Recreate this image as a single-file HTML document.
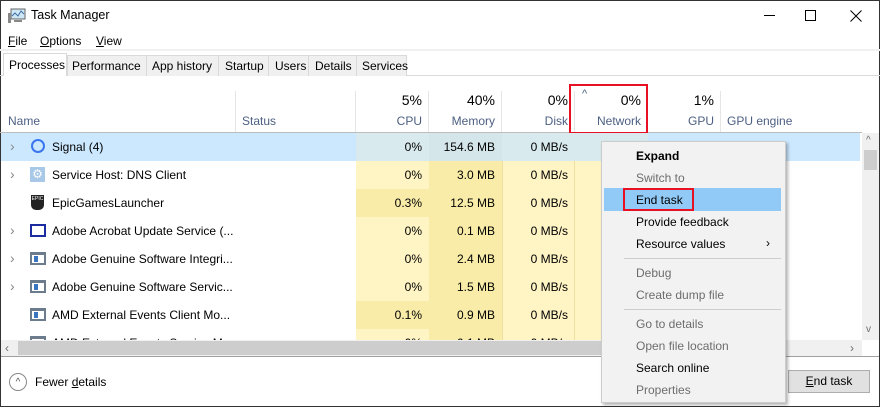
<!DOCTYPE html>
<html><head><style>
*{margin:0;padding:0;box-sizing:border-box}
body{width:880px;height:407px;overflow:hidden;background:#fff;font-family:"Liberation Sans",sans-serif;font-size:12px;color:#000;position:relative}
.a{position:absolute;white-space:nowrap}
.r{text-align:right}
.g{color:#4d6082}
.gy{color:#6d6d6d}
.ch{color:#888;font-size:14px}
</style></head><body>
<div class="a" style="left:0;top:0;width:880px;height:407px;border:1px solid #333"></div>
<svg class="a" style="left:8px;top:8px" width="18" height="16"><rect x="3" y="1" width="14" height="10" fill="#cfe6f5" stroke="#666"/><polyline points="4,8 7,5 10,8 13,3 16,6" fill="none" stroke="#3a6ea5"/><rect x="0" y="5" width="3" height="10" fill="#888"/><rect x="6" y="12" width="8" height="2" fill="#888"/></svg>
<div class="a" style="left:31px;top:8px;font-size:12.5px">Task Manager</div>
<div class="a" style="left:764px;top:15px;width:11px;height:1px;background:#000"></div>
<div class="a" style="left:805px;top:10px;width:11px;height:11px;border:1px solid #000"></div>
<svg class="a" style="left:850px;top:10px" width="12" height="12"><path d="M0.5 0.5L11.5 11.5M11.5 0.5L0.5 11.5" stroke="#000"/></svg>
<div class="a" style="left:8px;top:34px"><u>F</u>ile</div>
<div class="a" style="left:40px;top:34px"><u>O</u>ptions</div>
<div class="a" style="left:96px;top:34px"><u>V</u>iew</div>
<div class="a" style="left:0;top:49px;width:880px;height:2px;background:#f0f0f0"></div>
<div class="a" style="left:0;top:75px;width:880px;height:1px;background:#d9d9d9"></div>
<div class="a" style="left:67px;top:55px;width:340px;height:21px;background:#f0f0f0;border:1px solid #d9d9d9;border-bottom:none"></div>
<div class="a" style="left:3px;top:53px;width:64px;height:23px;background:#fff;border:1px solid #d9d9d9;border-bottom:none"></div>
<div class="a" style="left:9px;top:58px">Processes</div>
<div class="a" style="left:72px;top:59px">Performance</div>
<div class="a" style="left:152px;top:59px">App history</div>
<div class="a" style="left:225px;top:59px">Startup</div>
<div class="a" style="left:275px;top:59px">Users</div>
<div class="a" style="left:315px;top:59px">Details</div>
<div class="a" style="left:362px;top:59px">Services</div>
<div class="a" style="left:146px;top:56px;width:1px;height:20px;background:#d9d9d9"></div>
<div class="a" style="left:218px;top:56px;width:1px;height:20px;background:#d9d9d9"></div>
<div class="a" style="left:268px;top:56px;width:1px;height:20px;background:#d9d9d9"></div>
<div class="a" style="left:308px;top:56px;width:1px;height:20px;background:#d9d9d9"></div>
<div class="a" style="left:356px;top:56px;width:1px;height:20px;background:#d9d9d9"></div>
<div class="a" style="left:0;top:132px;width:862px;height:1px;background:#bcbcbc"></div>
<div class="a" style="left:235px;top:91px;width:1px;height:41px;background:#e5e5e5"></div>
<div class="a" style="left:355px;top:91px;width:1px;height:41px;background:#e5e5e5"></div>
<div class="a" style="left:428px;top:91px;width:1px;height:41px;background:#e5e5e5"></div>
<div class="a" style="left:501px;top:91px;width:1px;height:41px;background:#e5e5e5"></div>
<div class="a" style="left:574px;top:91px;width:1px;height:41px;background:#e5e5e5"></div>
<div class="a" style="left:720px;top:91px;width:1px;height:41px;background:#e5e5e5"></div>
<div class="a g" style="left:8px;top:114px">Name</div>
<div class="a g" style="left:242px;top:114px">Status</div>
<div class="a r" style="left:356px;top:92px;width:66px;font-size:14px">5%</div>
<div class="a r g" style="left:356px;top:114px;width:66px">CPU</div>
<div class="a r" style="left:429px;top:92px;width:66px;font-size:14px">40%</div>
<div class="a r g" style="left:429px;top:114px;width:66px">Memory</div>
<div class="a r" style="left:502px;top:92px;width:66px;font-size:14px">0%</div>
<div class="a r g" style="left:502px;top:114px;width:66px">Disk</div>
<div class="a g" style="left:582px;top:88px;font-size:11px">^</div>
<div class="a r" style="left:575px;top:92px;width:66px;font-size:14px">0%</div>
<div class="a r g" style="left:575px;top:114px;width:66px">Network</div>
<div class="a r" style="left:648px;top:92px;width:66px;font-size:14px">1%</div>
<div class="a r g" style="left:648px;top:114px;width:66px">GPU</div>
<div class="a g" style="left:727px;top:114px">GPU engine</div>
<div class="a" style="left:569px;top:84px;width:79px;height:50px;border:2px solid #e81123"></div>
<div class="a" style="left:356px;top:161px;width:73px;height:179px;background:#fff4c4"></div>
<div class="a" style="left:429px;top:161px;width:73px;height:179px;background:#f9eca8"></div>
<div class="a" style="left:502px;top:161px;width:73px;height:179px;background:#fff4c4"></div>
<div class="a" style="left:575px;top:161px;width:75px;height:179px;background:#fff4c4"></div>
<div class="a" style="left:356px;top:189px;width:73px;height:28px;background:#f9eca8"></div>
<div class="a" style="left:356px;top:301px;width:73px;height:28px;background:#f9eca8"></div>
<div class="a" style="left:502px;top:161px;width:1px;height:179px;background:#f0e0a0"></div>
<div class="a" style="left:574px;top:161px;width:1px;height:179px;background:#f0e0a0"></div>
<div class="a" style="left:1px;top:133px;width:859px;height:28px;background:#cce8ff"></div>
<div class="a" style="left:356px;top:133px;width:292px;height:28px;background:#d9eaee"></div>
<div class="a" style="left:429px;top:133px;width:73px;height:28px;background:#d5e6ea"></div>
<div class="a ch" style="left:10px;top:138px">›</div>
<div class="a" style="left:31px;top:139px;width:14px;height:14px;border:2px solid #3a76f0;border-radius:50%"></div>
<div class="a" style="left:52px;top:140px">Signal (4)</div>
<div class="a ch" style="left:10px;top:166px">›</div>
<div class="a" style="left:30px;top:167px;width:15px;height:15px;background:#a8c8e8;color:#fff;font-size:12px;text-align:center;line-height:15px">⚙</div>
<div class="a" style="left:52px;top:168px">Service Host: DNS Client</div>
<div class="a" style="left:31px;top:195px;width:13px;height:15px;background:#222;border-radius:0 0 5px 5px;color:#fff;font-size:5px;text-align:center;line-height:8px">EPIC</div>
<div class="a" style="left:52px;top:196px">EpicGamesLauncher</div>
<div class="a ch" style="left:10px;top:222px">›</div>
<div class="a" style="left:30px;top:224px;width:16px;height:13px;border:2px solid #1a2ca0"></div>
<div class="a" style="left:52px;top:224px">Adobe Acrobat Update Service (...</div>
<div class="a ch" style="left:10px;top:250px">›</div>
<div class="a" style="left:30px;top:252px;width:16px;height:13px;border:2px solid #6d7c8c;border-top-width:3px;background:#fff"><div style="position:absolute;left:2px;top:1px;width:4px;height:6px;background:#3a76c0"></div></div>
<div class="a" style="left:52px;top:252px">Adobe Genuine Software Integri...</div>
<div class="a ch" style="left:10px;top:278px">›</div>
<div class="a" style="left:30px;top:280px;width:16px;height:13px;border:2px solid #6d7c8c;border-top-width:3px"><div style="position:absolute;left:2px;top:1px;width:4px;height:6px;background:#3a76c0"></div></div>
<div class="a" style="left:52px;top:280px">Adobe Genuine Software Servic...</div>
<div class="a" style="left:30px;top:308px;width:16px;height:13px;border:2px solid #6d7c8c;border-top-width:3px"><div style="position:absolute;left:2px;top:1px;width:4px;height:6px;background:#3a76c0"></div></div>
<div class="a" style="left:52px;top:308px">AMD External Events Client Mo...</div>
<div class="a" style="left:0;top:329px;width:862px;height:11px;overflow:hidden">
 <div class="a ch" style="left:10px;top:5px">›</div>
 <div class="a" style="left:30px;top:7px;width:16px;height:13px;border:2px solid #6d7c8c;border-top-width:3px"></div>
 <div class="a" style="left:52px;top:7px">AMD External Events Service Mo...</div>
 <div class="a r" style="left:356px;top:7px;width:66px">0%</div><div class="a r" style="left:429px;top:7px;width:66px">0.1 MB</div><div class="a r" style="left:502px;top:7px;width:66px">0 MB/s</div>
</div>
<div class="a r" style="left:356px;top:140px;width:66px">0%</div><div class="a r" style="left:429px;top:140px;width:66px">154.6 MB</div><div class="a r" style="left:502px;top:140px;width:66px">0 MB/s</div>
<div class="a r" style="left:356px;top:168px;width:66px">0%</div><div class="a r" style="left:429px;top:168px;width:66px">3.0 MB</div><div class="a r" style="left:502px;top:168px;width:66px">0 MB/s</div>
<div class="a r" style="left:356px;top:196px;width:66px">0.3%</div><div class="a r" style="left:429px;top:196px;width:66px">12.5 MB</div><div class="a r" style="left:502px;top:196px;width:66px">0 MB/s</div>
<div class="a r" style="left:356px;top:224px;width:66px">0%</div><div class="a r" style="left:429px;top:224px;width:66px">0.1 MB</div><div class="a r" style="left:502px;top:224px;width:66px">0 MB/s</div>
<div class="a r" style="left:356px;top:252px;width:66px">0%</div><div class="a r" style="left:429px;top:252px;width:66px">2.4 MB</div><div class="a r" style="left:502px;top:252px;width:66px">0 MB/s</div>
<div class="a r" style="left:356px;top:280px;width:66px">0%</div><div class="a r" style="left:429px;top:280px;width:66px">1.5 MB</div><div class="a r" style="left:502px;top:280px;width:66px">0 MB/s</div>
<div class="a r" style="left:356px;top:308px;width:66px">0.1%</div><div class="a r" style="left:429px;top:308px;width:66px">0.9 MB</div><div class="a r" style="left:502px;top:308px;width:66px">0 MB/s</div>
<div class="a" style="left:862px;top:133px;width:17px;height:207px;background:#f0f0f0"></div>
<div class="a" style="left:864px;top:150px;width:13px;height:20px;background:#cdcdcd"></div>
<div class="a gy" style="left:866px;top:135px;font-size:10px">^</div>
<div class="a gy" style="left:866px;top:324px;font-size:10px">v</div>
<div class="a" style="left:1px;top:340px;width:861px;height:16px;background:#f0f0f0"></div>
<div class="a" style="left:18px;top:341px;width:600px;height:14px;background:#cdcdcd"></div>
<div class="a gy" style="left:5px;top:341px">‹</div>
<div class="a gy" style="left:850px;top:341px">›</div>
<div class="a" style="left:1px;top:356px;width:878px;height:1px;background:#a0a0a0"></div>
<div class="a" style="left:9px;top:373px;width:18px;height:18px;border:1px solid #888;border-radius:50%;color:#555;text-align:center;font-size:10px;line-height:18px">^</div>
<div class="a" style="left:35px;top:375px">Fewer <u>d</u>etails</div>
<div class="a" style="left:788px;top:370px;width:82px;height:23px;background:#e1e1e1;border:1px solid #adadad;text-align:center;line-height:21px"><u>E</u>nd task</div>
<div class="a" style="left:601px;top:141px;width:185px;height:262px;background:#f2f2f2;border:1px solid #ccc;box-shadow:2px 2px 3px rgba(0,0,0,.3)"></div>
<div class="a" style="left:604px;top:188px;width:177px;height:23px;background:#91c9f7"></div>
<div class="a" style="left:623px;top:188px;width:71px;height:23px;border:2px solid #e81123"></div>
<div class="a" style="left:636px;top:149px;font-weight:bold">Expand</div>
<div class="a gy" style="left:636px;top:171px">Switch to</div>
<div class="a" style="left:636px;top:193px">End task</div>
<div class="a" style="left:636px;top:215px">Provide feedback</div>
<div class="a" style="left:636px;top:237px">Resource values</div>
<div class="a" style="left:766px;top:236px">›</div>
<div class="a" style="left:624px;top:258px;width:157px;height:1px;background:#ccc"></div>
<div class="a gy" style="left:636px;top:266px">Debug</div>
<div class="a gy" style="left:636px;top:288px">Create dump file</div>
<div class="a" style="left:624px;top:309px;width:157px;height:1px;background:#ccc"></div>
<div class="a gy" style="left:636px;top:317px">Go to details</div>
<div class="a gy" style="left:636px;top:339px">Open file location</div>
<div class="a" style="left:636px;top:361px">Search online</div>
<div class="a gy" style="left:636px;top:383px">Properties</div>
</body></html>
